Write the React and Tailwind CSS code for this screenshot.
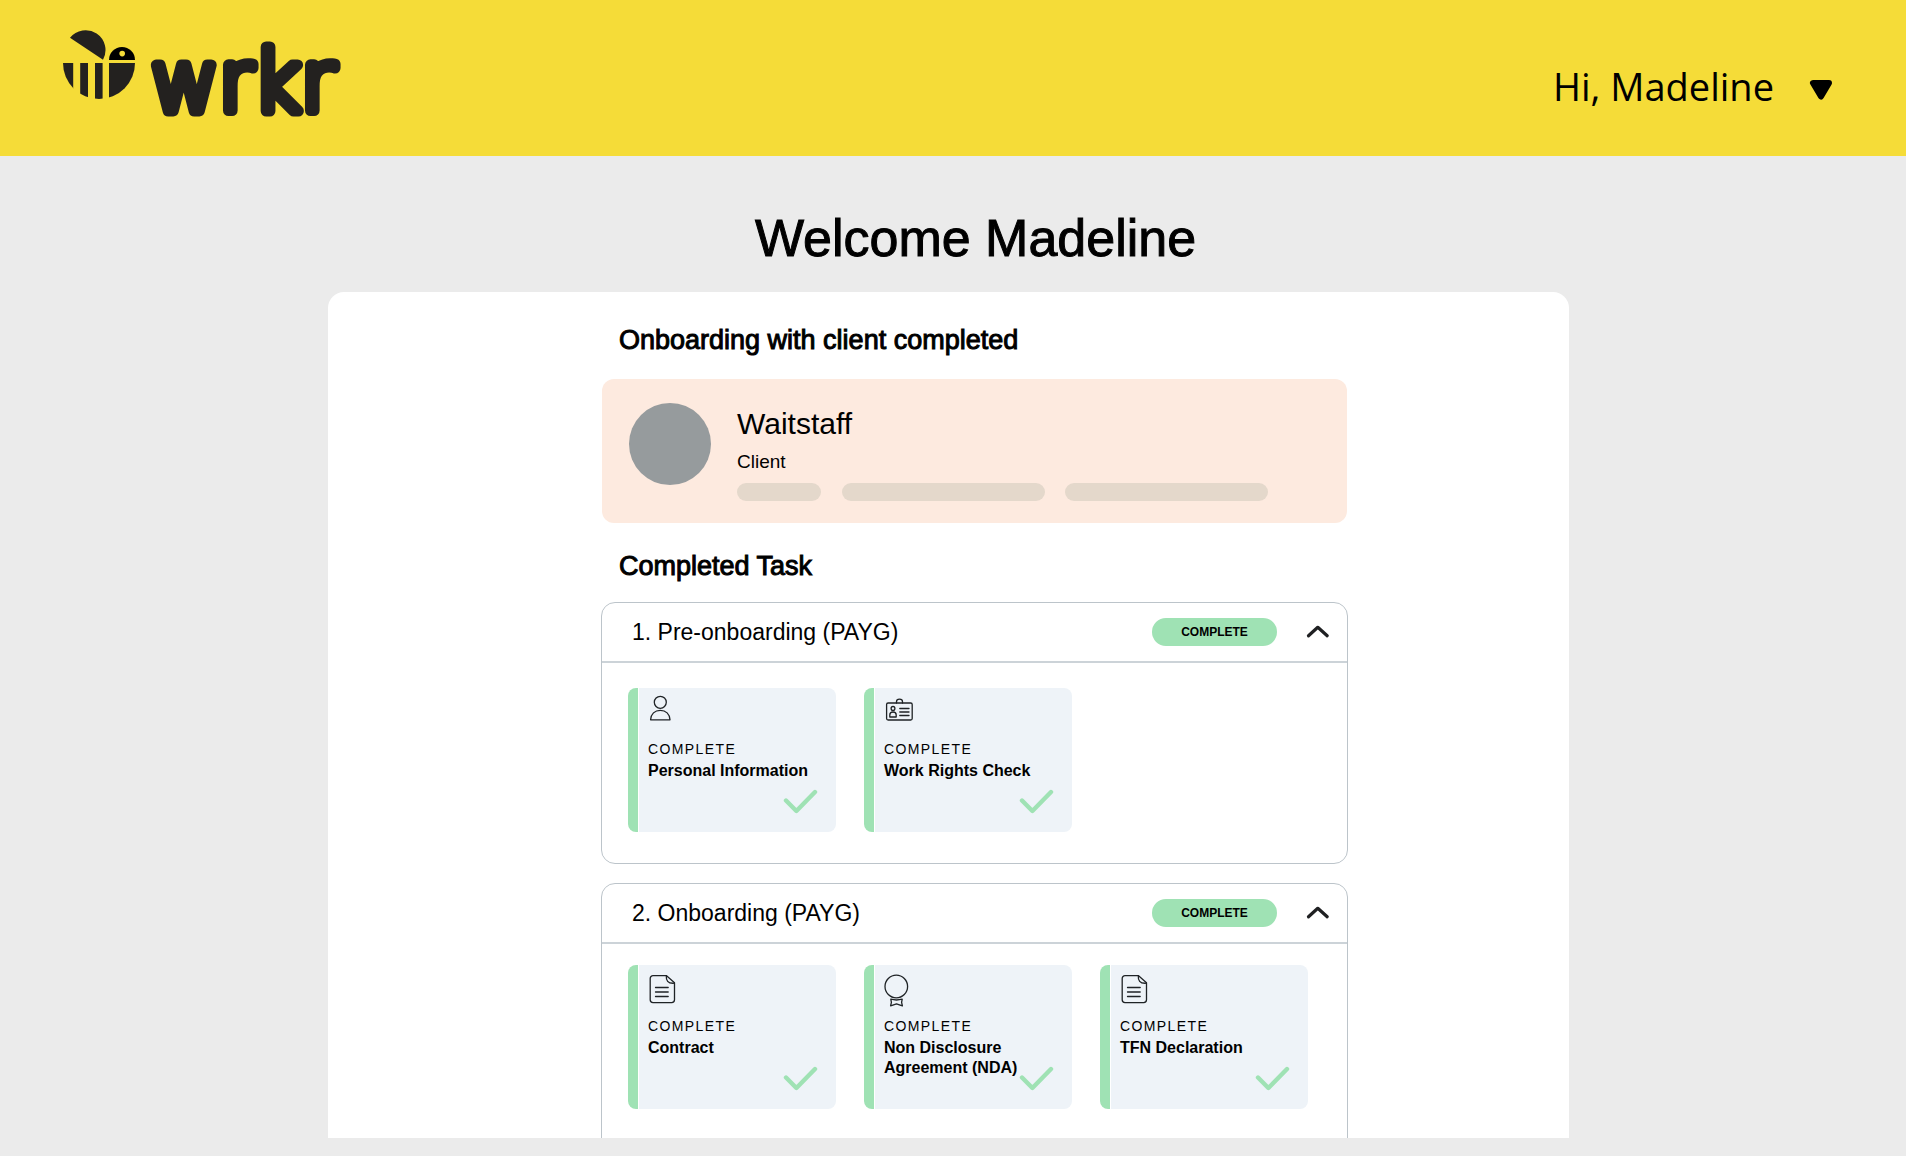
import React, { useState } from "react";

function Logo() {
  return (
    <svg role="img" aria-label="wrkr" width="300" height="120" viewBox="60 24 300 120">
      <defs>
        <clipPath id="bee-body">
          <path d="M63 63 H135 A36 36 0 0 1 63 63 Z" />
        </clipPath>
      </defs>
      <path d="M70 37.7 A19.9 19.9 0 0 1 103 59.7 Z" fill="#23211f" />
      <path d="M109 60 A13 13 0 0 1 135 60 Z" fill="#000" />
      <circle cx="122.2" cy="53.6" r="2.8" fill="#f5dc38" />
      <g clipPath="url(#bee-body)" fill="#23211f">
        <rect x="63" y="63" width="10.2" height="36" />
        <rect x="80.2" y="63" width="7.8" height="36" />
        <rect x="95" y="63" width="7.6" height="36" />
        <rect x="109" y="63" width="26" height="36" />
      </g>
      <text
        x="151"
        y="111"
        fontSize="83"
        fill="#23211f"
        stroke="#23211f"
        strokeWidth="11"
        strokeLinejoin="round"
        className="font-['DejaVu_Sans',sans-serif] font-extralight"
      >
        wrkr
      </text>
    </svg>
  );
}

const line = { fill: "none", stroke: "#1f2326", strokeWidth: 1.3, strokeLinecap: "round", strokeLinejoin: "round" };

function PersonIcon() {
  return (
    <svg width="24" height="34" viewBox="0 0 24 34" aria-hidden="true" {...line}>
      <circle cx="12.3" cy="14.3" r="6" />
      <path d="M2.6 31.8 C2.8 26 6.8 22.3 12.3 22.3 C17.8 22.3 21.8 26 22 31.8 Z" />
    </svg>
  );
}

function IdIcon() {
  return (
    <svg width="30" height="34" viewBox="0 0 30 34" aria-hidden="true" {...line}>
      <rect x="2.6" y="15" width="25.6" height="17" rx="1.5" />
      <path d="M12.5 15 V13.8 A3 2.6 0 0 1 18.5 13.8 V15" />
      <circle cx="9" cy="20.4" r="1.9" />
      <path d="M5.8 29 V27 A3.2 3 0 0 1 12.2 27 V29 Z" />
      <path d="M15.8 20.5 H25 M15.8 24 H25 M15.8 27.5 H25" />
    </svg>
  );
}

function DocumentIcon() {
  return (
    <svg width="28" height="40" viewBox="0 0 28 40" aria-hidden="true" {...line}>
      <path d="M5 10.6 H18.3 L26.5 17.8 V34.8 A2.8 2.8 0 0 1 23.7 37.6 H5 A2.8 2.8 0 0 1 2.2 34.8 V13.4 A2.8 2.8 0 0 1 5 10.6 Z" />
      <path d="M18.3 10.8 C18 15 19.5 18.8 26.3 18.2" />
      <path d="M7.5 22.5 H20.2 M7.5 27 H20.2 M7.5 31.5 H20.2" />
    </svg>
  );
}

function RosetteIcon() {
  return (
    <svg width="26" height="44" viewBox="0 0 26 44" aria-hidden="true" {...line}>
      <circle cx="12.3" cy="21.5" r="11.3" />
      <path d="M6.8 34.2 Q12.5 35.8 18.2 34.2 L17.6 37.4 L18.4 40.8 L12.5 38.8 L6.6 40.8 L7.4 37.4 Z" />
    </svg>
  );
}

function Tick() {
  return (
    <svg
      className="absolute right-[18px] bottom-[17px]"
      width="35"
      height="26"
      viewBox="0 0 35 26"
      fill="none"
      stroke="#9fe2b4"
      strokeWidth="4.4"
      strokeLinecap="round"
      strokeLinejoin="round"
      aria-hidden="true"
    >
      <path d="M3 11.5 L13.4 22 L32 3" />
    </svg>
  );
}

function TaskCard({ icon, title }) {
  return (
    <li className="relative flex h-36 w-[208px] gap-px">
      <span className="w-[10px] rounded-l-lg bg-[#9fe2b4]" />
      <div className="flex-1 rounded-r-lg bg-[#eef3f8] pl-[9px]">
        <div className="h-[51px]">{icon}</div>
        <p className="text-sm leading-5 tracking-widest">COMPLETE</p>
        <h4 className="w-[170px] pt-0.5 text-base leading-5 font-bold">{title}</h4>
      </div>
      <Tick />
    </li>
  );
}

function TaskGroup({ title, tasks, listClass }) {
  const [open, setOpen] = useState(true);
  return (
    <section className="rounded-[14px] border border-[#bcc4ca]">
      <h3>
        <button
          type="button"
          aria-expanded={open}
          onClick={() => setOpen(!open)}
          className="flex h-[60px] w-full items-center border-b-2 border-[#ccd3d8] pr-4 pl-[30px] text-left"
        >
          <span className="flex-1 text-[23px] leading-8">{title}</span>
          <span className="w-[125px] rounded-full bg-[#9fe2b4] text-center text-xs leading-7 font-bold">COMPLETE</span>
          <svg
            className={open ? "ml-7" : "ml-7 rotate-180"}
            width="26"
            height="18"
            viewBox="0 0 26 18"
            fill="none"
            stroke="#1f2022"
            strokeWidth="3.2"
            strokeLinecap="round"
            strokeLinejoin="round"
            aria-hidden="true"
          >
            <path d="M3.5 12.8 L12.8 4.3 L22.2 12.8" />
          </svg>
        </button>
      </h3>
      {open && (
        <ul className={listClass}>
          {tasks.map((t) => (
            <TaskCard key={t.title} icon={t.icon} title={t.title} />
          ))}
        </ul>
      )}
    </section>
  );
}

export default function App() {
  return (
    <div className="flex h-screen flex-col overflow-hidden bg-[#ebebeb] font-['Liberation_Sans',Arial,sans-serif] text-black">
      <header className="flex h-[156px] shrink-0 justify-between bg-[#f5dc38] pt-6 pr-[71px] pl-[60px]">
        <a href="#home" className="h-[120px]">
          <Logo />
        </a>
        <button
          type="button"
          className="mt-[35px] flex h-[54px] items-center gap-[33px] font-['Open_Sans','Noto_Sans',sans-serif] text-[38px] leading-[54px]"
        >
          Hi, Madeline
          <svg width="28" height="24" viewBox="0 0 28 24" aria-hidden="true" className="mt-2">
            <path d="M6 5 H22 L14 18.500 Z" stroke="#000" strokeWidth="6" strokeLinejoin="round" />
          </svg>
        </button>
      </header>

      <main className="flex min-h-0 flex-1 flex-col items-center pr-[9px] pb-[18px]">
        <h1 className="pt-[50px] pb-[22px] pl-[54px] text-[52px] leading-[64px] [-webkit-text-stroke:1px_black]">
          Welcome Madeline
        </h1>
        <div className="min-h-0 w-full max-w-[1241px] flex-1 overflow-hidden rounded-t-2xl bg-white pl-[52px]">
          <div className="mx-auto w-full max-w-[747px] pt-8">
            <h2 className="pl-[18px] text-[27px] leading-8 [-webkit-text-stroke:1px_black]">
              Onboarding with client completed
            </h2>
            <article className="mx-px mt-[23px] flex h-36 gap-[26px] rounded-xl bg-[#fdeadf] pt-6 pl-[27px]">
              <span className="size-[82px] rounded-full bg-[#969b9d]" />
              <div>
                <h3 className="pt-[3px] text-[30px] leading-9">Waitstaff</h3>
                <p className="pt-1.5 text-[19px] leading-7">Client</p>
                <div className="mt-[7px] flex">
                  <span className="h-[18px] w-[84px] rounded-full bg-[#e4d8cb]" />
                  <span className="ml-[21px] h-[18px] w-[203px] rounded-full bg-[#e4d8cb]" />
                  <span className="ml-5 h-[18px] w-[203px] rounded-full bg-[#e4d8cb]" />
                </div>
              </div>
            </article>
            <h2 className="mt-[27px] mb-5 pl-[18px] text-[27px] leading-8 [-webkit-text-stroke:1px_black]">
              Completed Task
            </h2>
            <div className="flex flex-col gap-[19px]">
              <TaskGroup
                title="1. Pre-onboarding (PAYG)"
                listClass="flex flex-wrap gap-7 px-[26px] pt-[25px] pb-[31px]"
                tasks={[
                  { title: "Personal Information", icon: <PersonIcon /> },
                  { title: "Work Rights Check", icon: <IdIcon /> },
                ]}
              />
              <TaskGroup
                title="2. Onboarding (PAYG)"
                listClass="flex flex-wrap gap-7 px-[26px] pt-[21px] pb-12"
                tasks={[
                  { title: "Contract", icon: <DocumentIcon /> },
                  { title: "Non Disclosure Agreement (NDA)", icon: <RosetteIcon /> },
                  { title: "TFN Declaration", icon: <DocumentIcon /> },
                ]}
              />
            </div>
          </div>
        </div>
      </main>
    </div>
  );
}
